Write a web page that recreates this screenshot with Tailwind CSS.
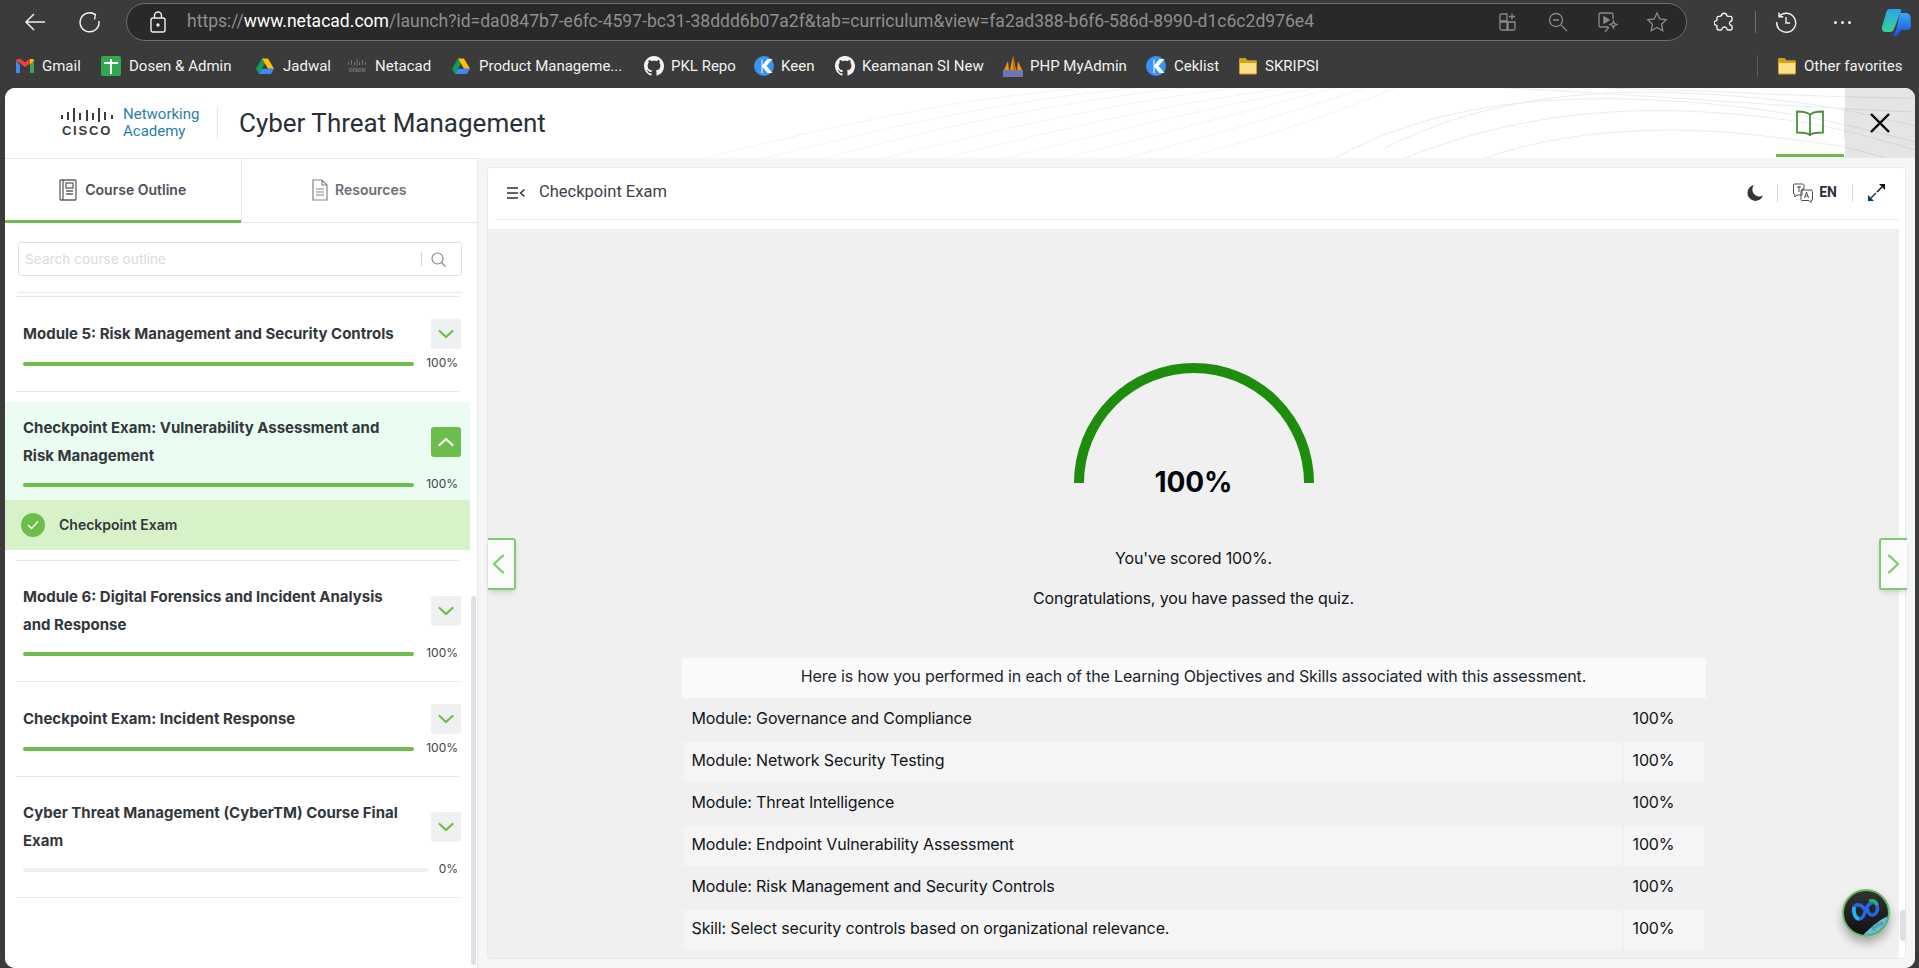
<!DOCTYPE html>
<html lang="en">
<head>
<meta charset="utf-8">
<title>Cyber Threat Management</title>
<script src="https://cdn.jsdelivr.net/npm/@tailwindcss/browser@4"></script>
</head>
<body class="w-[1919px] h-[968px] overflow-hidden bg-[#3b3b3b] font-['Inter',sans-serif]">
<svg class="absolute w-0 h-0">
  <defs>
    <symbol id="gh" viewBox="0 0 16 16"><path fill="#f4f4f4" d="M8 0C3.58 0 0 3.58 0 8c0 3.54 2.29 6.53 5.47 7.59.4.07.55-.17.55-.38 0-.19-.01-.82-.01-1.49-2.01.37-2.53-.49-2.69-.94-.09-.23-.48-.94-.82-1.13-.28-.15-.68-.52-.01-.53.63-.01 1.08.58 1.23.82.72 1.21 1.87.87 2.33.66.07-.52.28-.87.51-1.07-1.78-.2-3.64-.89-3.64-3.95 0-.87.31-1.59.82-2.15-.08-.2-.36-1.02.08-2.12 0 0 .67-.21 2.2.82.64-.18 1.32-.27 2-.27.68 0 1.36.09 2 .27 1.53-1.04 2.2-.82 2.2-.82.44 1.1.16 1.92.08 2.12.51.56.82 1.27.82 2.15 0 3.07-1.87 3.75-3.65 3.95.29.25.54.73.54 1.48 0 1.07-.01 1.93-.01 2.2 0 .21.15.46.55.38A8.013 8.013 0 0016 8c0-4.42-3.58-8-8-8z"/></symbol>
    <symbol id="drive" viewBox="0 0 20 18"><path fill="#0F9D58" d="M6.7 0 0 11.6l3.3 5.8 6.7-11.6z"/><path fill="#FFC107" d="M6.7 0h6.6L20 11.6h-6.6z"/><path fill="#4285F4" d="M3.3 17.4h13.4l3.3-5.8H6.7z"/></symbol>
    <symbol id="keen" viewBox="0 0 20 20"><circle cx="10" cy="10" r="10" fill="#3b93f7"/><path fill="#fff" d="M13.500 3h5l-6 7 6 7h-5L8.500 11v6.500L7.500 17V3.500l1 .3V9z"/></symbol>
    <symbol id="folder" viewBox="0 0 20 20"><path fill="#d69f18" d="M1 3.500C1 2.700 1.700 2 2.500 2h5l2 2.300h8c.8 0 1.500.7 1.500 1.500V17c0 .8-.7 1.500-1.500 1.500h-15C1.700 18.500 1 17.800 1 17z"/><path fill="#fbe08a" d="M2 7h16v10a.5.5 0 0 1-.5.5h-15A.5.5 0 0 1 2 17z"/></symbol>
    <symbol id="down" viewBox="0 0 30 30"><path d="M8.500 12 15 18l6.500-6" fill="none" stroke="#6cbd4b" stroke-width="2.200" stroke-linecap="round" stroke-linejoin="round"/></symbol>
  </defs>
</svg>

<!-- Toolbar -->
<div class="h-[44px] flex items-center relative">
  <svg class="w-[24px] h-[24px] ml-[23px] flex-none" viewBox="0 0 24 24" fill="none" stroke="#f0f0f0" stroke-width="1.500"><path d="M22 12H3M11 4l-8 8 8 8"/></svg>
  <svg class="w-[24px] h-[24px] ml-[31px] flex-none" viewBox="0 0 24 24" fill="none" stroke="#f0f0f0" stroke-width="1.500"><path d="M17 4.500A9.500 9.500 0 1 0 21 11"/><path d="M12.500 2.500 17.500 4.500 16.500 9.500" stroke-width="1.300"/></svg>
  <div class="ml-[24px] w-[1561px] h-[38px] rounded-full bg-[#292929] border border-[#6e6e6e] flex items-center flex-none">
    <svg class="w-[16px] h-[22px] ml-[23px] flex-none" viewBox="0 0 16 22" fill="none" stroke="#f0f0f0" stroke-width="1.400"><rect x="1" y="7" width="14" height="14" rx="2"/><path d="M4.500 7V4.500a3.500 3.500 0 0 1 7 0V7"/><circle cx="8" cy="14" r="1" fill="#f0f0f0"/></svg>
    <div class="ml-[21px] text-[17.55px] leading-none font-['Roboto',sans-serif] text-[#8f8f8f] whitespace-nowrap w-[1136px] flex-none">https://<span class="text-white">www.netacad.com</span>/launch?id=da0847b7-e6fc-4597-bc31-38ddd6b07a2f&amp;tab=curriculum&amp;view=fa2ad388-b6f6-586d-8990-d1c6c2d976e4</div>
    <svg class="w-[20px] h-[20px] ml-[175px] flex-none" viewBox="0 0 20 20" fill="none" stroke="#8a8a8a" stroke-width="1.300"><path d="M9 2H3.500A1.500 1.500 0 0 0 2 3.500V9h7zM2 10v6.500A1.500 1.500 0 0 0 3.500 18H9v-8zM10 10v8h5.500a1.500 1.500 0 0 0 1.500-1.500V10zM14 1.500v6M11 4.500h6"/></svg>
    <svg class="w-[20px] h-[20px] ml-[30px] flex-none" viewBox="0 0 20 20" fill="none" stroke="#8a8a8a" stroke-width="1.300"><circle cx="8" cy="8" r="6.500"/><path d="M5 8h6M13 13l6 6"/></svg>
    <svg class="w-[22px] h-[22px] ml-[29px] flex-none" viewBox="0 0 22 22" fill="none" stroke="#8a8a8a" stroke-width="1.300"><path d="M11 16H3.500A1.500 1.500 0 0 1 2 14.500v-11A1.500 1.500 0 0 1 3.500 2h11A1.500 1.500 0 0 1 16 3.500V8"/><path d="M7 6v6l5-3z" fill="#8a8a8a"/><path d="m16.500 10 1 2.500 2.500 1-2.500 1-1 2.500-1-2.500-2.500-1 2.500-1zM12 16l-4 5"/></svg>
    <svg class="w-[22px] h-[22px] ml-[27px] flex-none" viewBox="0 0 22 22" fill="none" stroke="#8a8a8a" stroke-width="1.300"><path d="m11 2 2.800 6 6.500.8-4.800 4.400 1.300 6.500L11 16.400l-5.800 3.300 1.300-6.500L1.700 8.800 8.200 8z"/></svg>
  </div>
  <svg class="w-[20px] h-[22px] ml-[27px] flex-none" viewBox="0 0 20 22" fill="none" stroke="#f0f0f0" stroke-width="1.400" stroke-linejoin="round"><path d="M7.500 4.500a2.700 2.700 0 0 1 5.300 0c.2.800 1 .9 1.700.9h2c.9 0 1.500.6 1.500 1.500v2.300c0 .8-.9.700-1.500 1.100a2.300 2.300 0 0 0 0 3.800c.6.400 1.500.3 1.500 1.100v2.300c0 .9-.6 1.500-1.500 1.500h-2.800c-.7 0-.8-.8-1-1.400a2.400 2.400 0 0 0-4.500 0c-.2.600-.3 1.400-1 1.400H4.500c-.9 0-1.500-.6-1.500-1.500v-2.300c0-.7-.7-.8-1.300-1a2.300 2.300 0 0 1 0-4.400c.6-.2 1.300-.3 1.300-1V6.900c0-.9.600-1.500 1.500-1.500h1.200c.6 0 1.100-.3 1.300-.9z"/></svg>
  <div class="w-px h-[22px] bg-[#6e6e6e] ml-[21px] flex-none"></div>
  <svg class="w-[22px] h-[22px] ml-[19px] flex-none" viewBox="0 0 22 22" fill="none" stroke="#f0f0f0" stroke-width="1.400"><path d="M4 5.500A9.500 9.500 0 1 1 1.700 11"/><path d="M4 1.500v4.300h4.300M11 6v6h4"/></svg>
  <div class="ml-[37px] flex gap-[4px] flex-none"><span class="w-[3px] h-[3px] rounded-full bg-[#f0f0f0]"></span><span class="w-[3px] h-[3px] rounded-full bg-[#f0f0f0]"></span><span class="w-[3px] h-[3px] rounded-full bg-[#f0f0f0]"></span></div>
  <svg class="w-[30px] h-[28px] ml-[30px] flex-none" viewBox="0 0 30 28"><defs><linearGradient id="c1" x1="0" y1="0" x2="0" y2="1"><stop offset="0" stop-color="#2aa5ea"/><stop offset="1" stop-color="#38d28e"/></linearGradient><linearGradient id="c2" x1="0" y1="0" x2="0" y2="1"><stop offset="0" stop-color="#3ba6f7"/><stop offset="1" stop-color="#1b4fe0"/></linearGradient></defs><path fill="url(#c2)" d="M19 5h6c2.500 0 4 1.800 4.500 4l.5 8c.3 3-2 5-4 5h-6l-3 4.500c-.5.800-1.500 1.500-2.500 1.500H9c4 0 5-3 6-6z"/><path fill="url(#c1)" d="M9 1h10c1 0 1.500 1 1 2l-7 18c-.8 2-2 3-4 3H5c-3 0-4.500-2-4-5L5 5c.5-2.500 2-4 4-4z"/></svg>
</div>

<!-- Bookmarks -->
<div class="h-[44px] flex items-center text-[15px] font-['Roboto',sans-serif] text-[#f2f2f2] whitespace-nowrap relative">
  <div class="flex items-center gap-[8px] ml-[16px] w-[85px] flex-none"><svg class="w-[18px] h-[14px] flex-none" viewBox="0 0 18 14"><path fill="#4285f4" d="M0 1.500V14h4V6z"/><path fill="#34a853" d="M14 6v8h4V1.500z"/><path fill="#ea4335" d="M0 1.500 9 8l5-3.600V0h-.5L9 3.300 4.500 0H2C.8 0 0 .6 0 1.500z"/><path fill="#fbbc04" d="M14 0v6l4-4.500C18 .6 17.200 0 16 0z"/></svg>Gmail</div>
  <div class="flex items-center gap-[8px] w-[155px] flex-none"><span class="w-[20px] h-[20px] bg-[#33a852] rounded-[2px] relative flex-none"><span class="absolute left-[3px] top-[6px] w-[14px] h-[2px] bg-white"></span><span class="absolute left-[9px] top-[3px] w-[2px] h-[15px] bg-white"></span></span>Dosen &amp; Admin</div>
  <div class="flex items-center gap-[9px] w-[91px] flex-none"><svg class="w-[18px] h-[17px] flex-none"><use href="#drive"/></svg>Jadwal</div>
  <div class="flex items-center gap-[8px] w-[105px] flex-none"><span class="w-[20px] flex-none flex flex-col items-center"><svg class="w-[18px] h-[8px]" viewBox="0 0 18 8" fill="#777"><path d="M0 3h1v3H0zM3 1h1v5H3zM6 3h1v3H6zM8.500 0h1v7h-1zM11 3h1v3h-1zM14 1h1v5h-1zM17 3h1v3h-1z"/></svg><span class="text-[7px] leading-[7px] font-bold text-[#777]">cisco</span></span>Netacad</div>
  <div class="flex items-center gap-[9px] w-[192px] flex-none"><svg class="w-[18px] h-[17px] flex-none"><use href="#drive"/></svg>Product Manageme...</div>
  <div class="flex items-center gap-[7px] w-[110px] flex-none"><svg class="w-[20px] h-[20px] flex-none"><use href="#gh"/></svg>PKL Repo</div>
  <div class="flex items-center gap-[7px] w-[81px] flex-none"><svg class="w-[20px] h-[20px] flex-none"><use href="#keen"/></svg>Keen</div>
  <div class="flex items-center gap-[7px] w-[168px] flex-none"><svg class="w-[20px] h-[20px] flex-none"><use href="#gh"/></svg>Keamanan SI New</div>
  <div class="flex items-center gap-[7px] w-[143px] flex-none"><svg class="w-[20px] h-[22px] flex-none" viewBox="0 0 20 22"><path fill="#f29111" d="M1 15 5 6l1 9zM7 15l3-14 3 14zM14 15l1-9 4 9z"/><path fill="#c76d0a" d="M10 1v14h3z"/><rect x="0" y="15" width="20" height="7" fill="#6c78af"/></svg>PHP MyAdmin</div>
  <div class="flex items-center gap-[8px] w-[92px] flex-none"><svg class="w-[20px] h-[20px] flex-none"><use href="#keen"/></svg>Ceklist</div>
  <div class="flex items-center gap-[7px] w-[519px] flex-none"><svg class="w-[20px] h-[20px] flex-none"><use href="#folder"/></svg>SKRIPSI</div>
  <div class="w-px h-[22px] bg-[#5a5a5a] flex-none"></div>
  <div class="flex items-center gap-[7px] ml-[19px] flex-none"><svg class="w-[20px] h-[20px] flex-none"><use href="#folder"/></svg>Other favorites</div>
</div>

<!-- Page -->
<div class="ml-[5px] w-[1910px] h-[880px] rounded-[10px] overflow-hidden bg-white flex flex-col">
  <!-- App header -->
  <header class="relative h-[70px] flex-none flex items-center bg-white overflow-hidden">
    <svg class="absolute left-0 top-0 w-[1910px] h-[70px]" viewBox="0 0 1910 70" fill="none" stroke="#f1f3f5" stroke-width="1">
      <path d="M700 70C820 40 950 10 1080 0"/><path d="M760 70C880 40 1000 12 1130 0"/><path d="M820 70C930 40 1050 14 1180 0"/><path d="M880 70C980 45 1100 16 1230 0"/><path d="M940 70C1040 45 1150 18 1280 0"/><path d="M1000 70C1090 48 1190 22 1310 0"/><path d="M1060 70C1140 50 1230 26 1330 0"/><path d="M1120 70C1190 52 1270 30 1360 0"/><path d="M1180 70C1240 54 1310 34 1390 0"/>
      <path d="M1330 70C1420 20 1530 6 1650 12S1840 36 1910 54" stroke="#e8edf2"/><path d="M1380 60C1470 14 1580 -2 1700 6S1850 24 1910 38" stroke="#e8edf2"/><path d="M1400 70C1500 30 1600 18 1700 24S1850 44 1910 62" stroke="#e8edf2"/><path d="M1500 0C1600 4 1760 18 1910 24" stroke="#e8edf2"/><path d="M1600 0C1700 2 1820 10 1910 10" stroke="#e8edf2"/><path d="M1480 70C1560 42 1660 36 1760 48S1850 62 1880 70" stroke="#e8edf2"/>
    </svg>
    <div class="relative ml-[56px] w-[52px] flex-none flex flex-col items-center">
      <svg class="w-[52px] h-[15px]" viewBox="0 0 52 15" fill="#3c3c3c"><rect x="0" y="7" width="2" height="4"/><rect x="6" y="4" width="2" height="8"/><rect x="12" y="0" width="2" height="14"/><rect x="18" y="5" width="2" height="7"/><rect x="25" y="2" width="2" height="11"/><rect x="31" y="5" width="2" height="7"/><rect x="37" y="0" width="2" height="14"/><rect x="43" y="4" width="2" height="8"/><rect x="50" y="7" width="2" height="4"/></svg>
      <span class="text-[13px] leading-[15px] font-black tracking-[1.800px] text-[#3c3c3c] font-['Liberation_Sans',sans-serif]">CISCO</span>
    </div>
    <div class="relative ml-[10px] w-[94px] flex-none text-[15px] leading-[17px] text-[#2b7fa8] font-['Roboto',sans-serif]"><div>Networking</div><div>Academy</div></div>
    <div class="relative w-px h-[32px] bg-[#e3e3e3] flex-none"></div>
    <h1 class="relative ml-[21px] text-[26px] leading-none font-normal text-[#2a3038] font-['Roboto',sans-serif] whitespace-nowrap">Cyber Threat Management</h1>
    <div class="relative ml-auto h-full w-[139px] flex-none flex">
      <div class="relative w-[68px] h-full flex items-center justify-center">
        <svg class="w-[28px] h-[27px]" viewBox="0 0 28 27" fill="none" stroke="#4e8f3c" stroke-width="1.800"><path d="M14 5C12 2 8 1.500 1 1.500v21c7 0 11 .5 13 2.500 2-2 6-2.500 13-2.500v-21C20 1.500 16 2 14 5zM14 5v21"/></svg>
        <span class="absolute left-0 right-0 bottom-[1px] h-[3px] bg-[#6cbd4b]"></span>
      </div>
      <div class="w-px h-[32px] bg-[#e3e3e3] self-center"></div>
      <div class="flex-1 flex items-center justify-center bg-black/10">
        <svg class="w-[20px] h-[20px]" viewBox="0 0 20 20" stroke="#000" stroke-width="2.400"><path d="M1 1l18 18M19 1 1 19"/></svg>
      </div>
    </div>
  </header>

  <div class="flex-1 flex min-h-0">
    <!-- Sidebar -->
    <aside class="relative w-[473px] flex-none bg-white border-r border-[#e6e8ea]">
      <div class="flex h-[65px] border-b border-[#e4e6e8]">
        <div class="relative w-[236px] pb-[2px] flex items-center justify-center gap-[8px] border-t border-[#e4e6e8] text-[14px] font-semibold text-[#4d5157]">
          <svg class="w-[18px] h-[22px]" viewBox="0 0 18 22" fill="none" stroke="#5c5f63" stroke-width="1.300"><rect x="1" y="1" width="16" height="20" rx="1"/><path d="M4 1v20"/><rect x="7" y="4" width="7" height="5"/><path d="M7 12h7M7 15h7"/></svg>Course Outline
          <span class="absolute left-0 right-0 -bottom-[1px] h-[3px] bg-[#6cbd4b]"></span>
        </div>
        <div class="w-[237px] pb-[2px] flex items-center justify-center gap-[7px] border-t border-l border-[#e4e6e8] text-[14px] font-semibold text-[#6b6e72]">
          <svg class="w-[16px] h-[22px]" viewBox="0 0 16 22" fill="none" stroke="#808386" stroke-width="1.200"><path d="M1 1h9l5 5v15H1zM10 1v5h5M4 10h8M4 13h8M4 16h8"/></svg>Resources
        </div>
      </div>
      <div class="px-[13px] pt-[19px]">
        <div class="h-[34px] w-[444px] border border-[#dfe1e3] rounded-[3px] flex items-center">
          <span class="ml-[6px] text-[13.7px] text-[#dcdcdc]">Search course outline</span>
          <span class="ml-auto w-px h-[14px] bg-[#d0d0d0]"></span>
          <svg class="w-[15px] h-[15px] ml-[9px] mr-[15px]" viewBox="0 0 15 15" fill="none" stroke="#8a8a8a" stroke-width="1.200"><circle cx="6.500" cy="6.500" r="5.500"/><path d="m10.500 10.500 4 4"/></svg>
        </div>
        <div class="w-[444px] h-px bg-[#e4e6e8] mt-[16px]"></div>
      </div>

      <div class="mt-[3px] ml-[11px] w-[444px] h-px bg-[#e8e9ea]"></div>
      <!-- Module 5 -->
      <div class="pt-[22px] pl-[18px]">
        <div class="flex items-center h-[30px]"><span class="w-[408px] flex-none text-[15px] leading-[28px] font-bold text-[#33373c]">Module 5: Risk Management and Security Controls</span><svg class="w-[30px] h-[30px] bg-[#eef0f1] rounded-[3px] flex-none"><use href="#down"/></svg></div>
        <div class="flex items-center h-[4px] mt-[13px] w-[435px]"><span class="w-[391px] h-[4px] rounded-full bg-[#6cbd4b] flex-none"></span><span class="ml-auto text-[12px] leading-[4px] text-[#3f4348] -translate-y-[1px]">100%</span></div>
      </div>
      <div class="mt-[25px] ml-[11px] w-[444px] h-px bg-[#e8e9ea]"></div>
      <!-- Active -->
      <div class="mt-[10px] w-[465px] bg-[#ebfdf2]">
        <div class="pt-[12px] pb-[13px] pl-[18px]">
          <div class="flex items-center"><span class="w-[408px] flex-none text-[15px] leading-[28px] font-bold text-[#33373c]">Checkpoint Exam: Vulnerability Assessment and<br>Risk Management</span>
            <span class="w-[30px] h-[30px] bg-[#6cbd4b] rounded-[3px] flex-none flex items-center justify-center"><svg class="w-[30px] h-[30px]" viewBox="0 0 30 30"><path d="M8.500 18 15 12l6.500 6" fill="none" stroke="#fff" stroke-width="2.200" stroke-linecap="round" stroke-linejoin="round"/></svg></span></div>
          <div class="flex items-center h-[4px] mt-[13px] w-[435px]"><span class="w-[391px] h-[4px] rounded-full bg-[#6cbd4b] flex-none"></span><span class="ml-auto text-[12px] leading-[4px] text-[#3f4348] -translate-y-[1px]">100%</span></div>
        </div>
        <div class="h-[50px] bg-[#d7f1c9] flex items-center pl-[16px]">
          <span class="w-[24px] h-[24px] rounded-full bg-[#6cbd4b] flex items-center justify-center flex-none"><svg class="w-[12px] h-[10px]" viewBox="0 0 12 10" fill="none" stroke="#fff" stroke-width="1.300"><path d="m1 5 3.500 3.500L11 1.500"/></svg></span>
          <span class="ml-[14px] pb-[1px] text-[14px] font-semibold text-[#33373c]">Checkpoint Exam</span>
        </div>
      </div>
      <div class="mt-[10px] ml-[11px] w-[444px] h-px bg-[#e8e9ea]"></div>
      <!-- Module 6 -->
      <div class="pt-[22px] pl-[18px]">
        <div class="flex items-center"><span class="w-[408px] flex-none text-[15px] leading-[28px] font-bold text-[#33373c]">Module 6: Digital Forensics and Incident Analysis<br>and Response</span><svg class="w-[30px] h-[30px] bg-[#eef0f1] rounded-[3px] flex-none"><use href="#down"/></svg></div>
        <div class="flex items-center h-[4px] mt-[13px] w-[435px]"><span class="w-[391px] h-[4px] rounded-full bg-[#6cbd4b] flex-none"></span><span class="ml-auto text-[12px] leading-[4px] text-[#3f4348] -translate-y-[1px]">100%</span></div>
      </div>
      <div class="mt-[25px] ml-[11px] w-[444px] h-px bg-[#e8e9ea]"></div>
      <!-- CE Incident -->
      <div class="pt-[22px] pl-[18px]">
        <div class="flex items-center h-[30px]"><span class="w-[408px] flex-none text-[15px] leading-[28px] font-bold text-[#33373c]">Checkpoint Exam: Incident Response</span><svg class="w-[30px] h-[30px] bg-[#eef0f1] rounded-[3px] flex-none"><use href="#down"/></svg></div>
        <div class="flex items-center h-[4px] mt-[13px] w-[435px]"><span class="w-[391px] h-[4px] rounded-full bg-[#6cbd4b] flex-none"></span><span class="ml-auto text-[12px] leading-[4px] text-[#3f4348] -translate-y-[1px]">100%</span></div>
      </div>
      <div class="mt-[25px] ml-[11px] w-[444px] h-px bg-[#e8e9ea]"></div>
      <!-- Final -->
      <div class="pt-[22px] pl-[18px]">
        <div class="flex items-center"><span class="w-[408px] flex-none text-[15px] leading-[28px] font-bold text-[#33373c]">Cyber Threat Management (CyberTM) Course Final<br>Exam</span><svg class="w-[30px] h-[30px] bg-[#eef0f1] rounded-[3px] flex-none"><use href="#down"/></svg></div>
        <div class="flex items-center h-[4px] mt-[13px] w-[435px]"><span class="w-[405px] h-[4px] rounded-full bg-[#f0f0f0] flex-none"></span><span class="ml-auto text-[12px] leading-[4px] text-[#3f4348] -translate-y-[1px]">0%</span></div>
      </div>
      <div class="mt-[25px] ml-[11px] w-[444px] h-px bg-[#e8e9ea]"></div>
      <span class="absolute left-[466px] top-[438px] w-[5px] h-[369px] rounded-full bg-[#dde1e6]"></span>
    </aside>

    <!-- Content -->
    <main class="flex-1 min-w-0 bg-[#f4f6f8] pl-[9px] pr-[9px] pt-[9px] pb-[9px]">
      <div class="relative h-full w-[1419px] bg-white rounded-[3px] border border-[#e8eaec] flex flex-col">
        <div class="h-[52px] pb-[2px] flex-none mx-[7px] border-b border-[#e5e6e8] flex items-center">
          <svg class="w-[18px] h-[12px] ml-[12px] flex-none" viewBox="0 0 18 12" fill="none" stroke="#2d3138" stroke-width="1.500"><path d="M0 1h11M0 6h11M0 11h11M17.500 2.500 13.500 6l4 3.500"/></svg>
          <span class="ml-[14px] text-[16.5px] text-[#3d4249] font-['Roboto',sans-serif]">Checkpoint Exam</span>
          <svg class="ml-auto w-[16px] h-[16px] flex-none" viewBox="0 0 16 16" fill="#33373c"><path d="M7 0a8 8 0 1 0 9 10.500A7 7 0 0 1 7 0z"/></svg>
          <span class="w-px h-[18px] bg-[#d5d7d9] ml-[14px] flex-none"></span>
          <svg class="w-[20px] h-[20px] ml-[15px] flex-none" viewBox="0 0 20 20" fill="none" stroke="#4a4e54" stroke-width="1"><path d="M1.500 1h8A1.500 1.500 0 0 1 11 2.500V6H9v6H4l-2 2v-2.500A1.500 1.500 0 0 1 .5 10V2A1 1 0 0 1 1.500 1zM9 7h9a1.500 1.500 0 0 1 1.500 1.500V16a1.500 1.500 0 0 1-1.500 1.500v2l-2-2H9A1 1 0 0 1 8 16V8a1 1 0 0 1 1-1zM4 4h4M6 3v6M11.500 15l2-6 2 6M12.500 13h2"/></svg>
          <span class="ml-[6px] text-[14px] font-bold text-[#2d3138] font-['Roboto',sans-serif]">EN</span>
          <span class="w-px h-[18px] bg-[#d5d7d9] ml-[15px] flex-none"></span>
          <svg class="w-[17px] h-[17px] ml-[15px] mr-[13px] flex-none" viewBox="0 0 17 17" fill="none" stroke-width="1.400"><path d="M3 14 8 9" stroke="#0d3b66"/><path d="M9 8l5-5" stroke="#111"/><path d="M11 0h6v6z" fill="#111" stroke="none"/><path d="M0 11v6h6z" fill="#0d3b66" stroke="none"/></svg>
        </div>
        <div class="flex-1 flex mt-[9px] min-h-0">
          <div class="w-[1411px] flex-none bg-[#f0f0f0] flex flex-col items-center text-[16px] tracking-[-0.13px] text-[#111418]">
            <div class="relative mt-[134px] w-[240px] h-[120px] flex-none">
              <svg class="w-[240px] h-[120px]" viewBox="0 0 240 120" fill="none"><path d="M5 120A115 115 0 0 1 235 120" stroke="#1e8c0d" stroke-width="10"/></svg>
              <span class="absolute left-0 right-0 top-[100px] text-center text-[28px] leading-[38px] font-bold text-[#05070a]">100%</span>
            </div>
            <p class="mt-[63px] leading-[24px]">You've scored 100%.</p>
            <p class="mt-[16px] leading-[24px]">Congratulations, you have passed the quiz.</p>
            <div class="mt-[48px] w-[1024px] flex flex-col gap-[2px]">
              <div class="h-[40px] pb-[4px] bg-[#fafafa] flex items-center justify-center text-[#20262e]">Here is how you performed in each of the Learning Objectives and Skills associated with this assessment.</div>
              <div class="mx-[2px] grid grid-cols-[938px_80px] gap-x-[2px] h-[40px]"><div class="pl-[8px] pb-[4px] flex items-center">Module: Governance and Compliance</div><div class="pl-[9px] pb-[4px] flex items-center">100%</div></div>
              <div class="mx-[2px] grid grid-cols-[938px_80px] gap-x-[2px] h-[40px]"><div class="pl-[8px] pb-[4px] bg-[#f5f5f5] flex items-center">Module: Network Security Testing</div><div class="pl-[9px] pb-[4px] bg-[#f5f5f5] flex items-center">100%</div></div>
              <div class="mx-[2px] grid grid-cols-[938px_80px] gap-x-[2px] h-[40px]"><div class="pl-[8px] pb-[4px] flex items-center">Module: Threat Intelligence</div><div class="pl-[9px] pb-[4px] flex items-center">100%</div></div>
              <div class="mx-[2px] grid grid-cols-[938px_80px] gap-x-[2px] h-[40px]"><div class="pl-[8px] pb-[4px] bg-[#f5f5f5] flex items-center">Module: Endpoint Vulnerability Assessment</div><div class="pl-[9px] pb-[4px] bg-[#f5f5f5] flex items-center">100%</div></div>
              <div class="mx-[2px] grid grid-cols-[938px_80px] gap-x-[2px] h-[40px]"><div class="pl-[8px] pb-[4px] flex items-center">Module: Risk Management and Security Controls</div><div class="pl-[9px] pb-[4px] flex items-center">100%</div></div>
              <div class="mx-[2px] grid grid-cols-[938px_80px] gap-x-[2px] h-[40px]"><div class="pl-[8px] pb-[4px] bg-[#f5f5f5] flex items-center">Skill: Select security controls based on organizational relevance.</div><div class="pl-[9px] pb-[4px] bg-[#f5f5f5] flex items-center">100%</div></div>
            </div>
          </div>
          <div class="flex-1 relative"><span class="absolute left-[1px] top-[681px] w-[6px] h-[31px] rounded-full bg-[#dde1e6]"></span></div>
        </div>

        <!-- Prev / next -->
        <div class="absolute left-0 top-[370px] w-[28px] h-[52px] bg-[#fbfbfb] border-2 border-l-0 border-[#7fcb6f] rounded-r-[3px] shadow-md flex items-center pl-[4px]">
          <svg class="w-[13px] h-[20px]" viewBox="0 0 13 20" fill="none" stroke="#7fcb6f" stroke-width="2.400" stroke-linecap="round" stroke-linejoin="round"><path d="M11 1.500 2 10l9 8.500"/></svg>
        </div>
        <div class="absolute right-[-2px] top-[370px] w-[28px] h-[52px] bg-[#fbfbfb] border-2 border-r-0 border-[#7fcb6f] rounded-l-[3px] shadow-md flex items-center pl-[6px]">
          <svg class="w-[13px] h-[20px]" viewBox="0 0 13 20" fill="none" stroke="#7fcb6f" stroke-width="2.400" stroke-linecap="round" stroke-linejoin="round"><path d="M2 1.500 11 10l-9 8.500"/></svg>
        </div>
        <!-- Chat bubble -->
        <div class="absolute left-[1354px] top-[721px] w-[48px] h-[48px] rounded-full overflow-hidden border-2 border-[#6fb56a] bg-gradient-to-b from-[#333] to-[#111] shadow-[0_6px_10px_rgba(0,0,0,0.3)]">
          <svg class="w-[44px] h-[44px]" viewBox="0 0 44 44" fill="none"><path d="M44 25C36 29 30 33 19 44h25z" fill="#63bfd4"/><text x="29" y="40" transform="rotate(-35 29 40)" font-size="7" font-family="Liberation Serif, serif" fill="#3b6f7c">Beta</text><path d="M22 21c-2-6-8-9-11-6s-1 13 4 13 6-7 7-10 5-8 9-6 3 11-2 12-5-5-6-7" stroke="#2468e8" stroke-width="3.500"/><path d="M25 10c3-1 7-1 8 4" stroke="#27b45a" stroke-width="3"/><path d="M10 16c-.5 5 1 11 5 12" stroke="#25b5e8" stroke-width="3.500"/></svg>
        </div>
      </div>
    </main>
  </div>
</div>
</body>
</html>
